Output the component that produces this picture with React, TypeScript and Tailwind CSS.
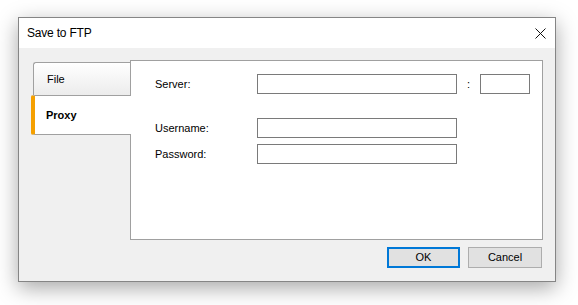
import React from 'react';

const font = { fontFamily: '"Liberation Sans", Arial, sans-serif' };

function CloseIcon() {
  return (
    <svg width="11" height="11" viewBox="0 0 11 11" className="block">
      <path d="M0.5 0.5 L10.5 10.5 M10.5 0.5 L0.5 10.5" stroke="#111" strokeWidth="1" fill="none" />
    </svg>
  );
}

function Field({ label, className = '' }: { label: string; className?: string }) {
  return (
    <div className={`flex items-center h-[20px] ${className}`}>
      <span className="w-[102px] pl-[24px] box-content text-[11px] text-black">{label}</span>
      <div className="w-[200px] h-[20px] border border-[#7a7a7a] bg-white" />
    </div>
  );
}

export default function App() {
  return (
    <div className="w-[578px] h-[305px] bg-white pt-[17px] pl-[18px]" style={font}>
      {/* Dialog window */}
      <div className="w-[538px] h-[265px] border border-[#858585] bg-[#f0f0f0] flex flex-col shadow-[0_6px_20px_rgba(0,0,0,0.35)]">
        {/* Title bar */}
        <div className="h-[30px] bg-white flex items-center justify-between pl-[8px] pr-[9px]">
          <span className="text-[12px] text-black tracking-[-0.2px]">Save to FTP</span>
          <CloseIcon />
        </div>

        {/* Body */}
        <div className="flex-1 flex flex-col pt-[12px] pr-[12px]">
          <div className="flex h-[180px]">
            {/* Tabs */}
            <div className="w-[111px] pl-[12px] pt-[2px] flex flex-col">
              <div className="ml-[2px] h-[33px] border-t border-l border-[#a0a0a0] rounded-tl-[3px] bg-gradient-to-b from-white to-[#ececec] flex items-center pl-[13px] text-[11px] text-black">
                File
              </div>
              <div className="relative z-10 -mr-px h-[40px] border-t border-b border-[#a0a0a0] border-l-4 border-l-[#f5a000] rounded-l-[2px] bg-white flex items-center pl-[11px] text-[11px] font-bold text-black">
                Proxy
              </div>
            </div>

            {/* Tab page */}
            <div className="flex-1 border border-[#a0a0a0] bg-white pt-[13px]">
              <div className="flex items-center h-[20px]">
                <span className="w-[102px] pl-[24px] box-content text-[11px] text-black">Server:</span>
                <div className="w-[200px] h-[20px] border border-[#7a7a7a] bg-white" />
                <span className="w-[23px] text-center text-[11px] text-black">:</span>
                <div className="w-[50px] h-[20px] border border-[#7a7a7a] bg-white" />
              </div>
              <Field label="Username:" className="mt-[24px]" />
              <Field label="Password:" className="mt-[6px]" />
            </div>
          </div>

          {/* Buttons */}
          <div className="flex justify-end gap-[8px] mt-[7px] mr-px">
            <button className="w-[73px] h-[21px] border-2 border-[#0078d7] bg-[#e1e1e1] text-[11px] text-black flex items-center justify-center">
              OK
            </button>
            <button className="w-[74px] h-[21px] border border-[#adadad] bg-[#e1e1e1] text-[11px] text-black flex items-center justify-center">
              Cancel
            </button>
          </div>
        </div>
      </div>
    </div>
  );
}
